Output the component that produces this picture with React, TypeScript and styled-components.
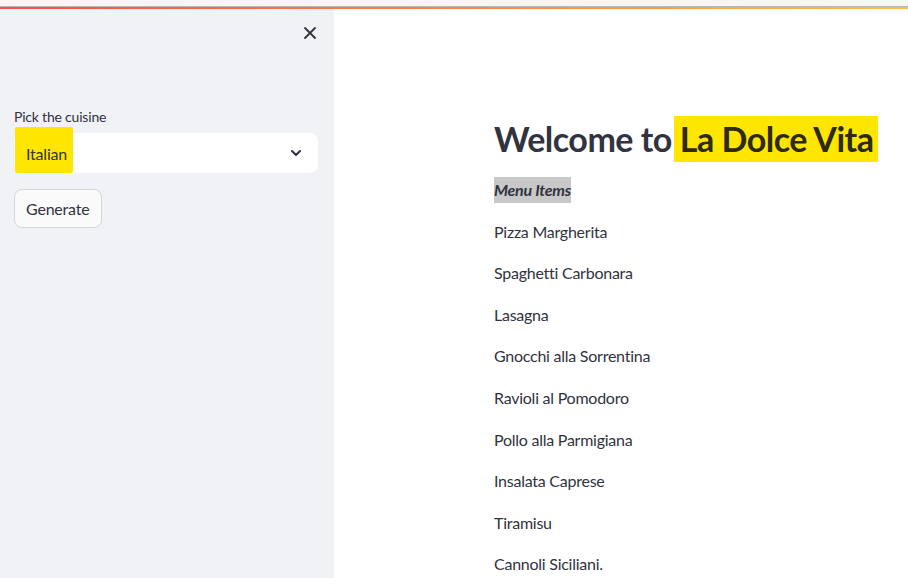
import React from "react";
import styled, { createGlobalStyle } from "styled-components";

const Global = createGlobalStyle`
  html, body { margin: 0; padding: 0; background: #ffffff; }
  body { font-family: "Lato", "Noto Sans", sans-serif; color: #31333f; }
  * { box-sizing: border-box; }
`;

const Page = styled.div`
  width: 908px;
  height: 578px;
  display: flex;
  flex-direction: column;
  overflow: hidden;
`;

const Chrome = styled.div`
  height: 7px;
  background: #f6f6f6;
  border-bottom: 1px solid #b8b8b8;
  flex: none;
`;

const Decoration = styled.div`
  height: 2px;
  flex: none;
  background: linear-gradient(90deg, #ff4b4b, #ffbd45);
`;

const Body = styled.div`
  flex: 1;
  display: flex;
  min-height: 0;
`;

const Sidebar = styled.aside`
  width: 334px;
  flex: none;
  background: #f0f2f6;
  padding: 0 16px 0 14px;
  display: flex;
  flex-direction: column;
`;

const SidebarHeader = styled.div`
  height: 48px;
  display: flex;
  justify-content: flex-end;
  align-items: center;
  margin-right: -4px;
`;

const CloseButton = styled.button`
  width: 24px;
  height: 24px;
  border: none;
  background: transparent;
  padding: 0;
  display: flex;
  align-items: center;
  justify-content: center;
  color: #31333f;
`;

const Label = styled.label`
  margin-top: 50px;
  font-size: 14px;
  line-height: 20px;
  color: #31333f;
  margin-bottom: 6px;
  letter-spacing: -0.2px;
`;

const SelectBox = styled.div`
  height: 40px;
  background: #ffffff;
  border-radius: 8px;
  display: flex;
  align-items: center;
  justify-content: space-between;
  padding: 0 12px;
  font-size: 16px;
  letter-spacing: -0.2px;
`;

type MarkBox = { $l: number; $r: number; $t: number; $b: number };

const Highlight = styled.span<MarkBox>`
  position: relative;
  z-index: 0;
  &::before {
    content: "";
    position: absolute;
    z-index: -1;
    background: #ffe600;
    left: ${(p) => p.$l}px;
    right: ${(p) => p.$r}px;
    top: ${(p) => p.$t}px;
    bottom: ${(p) => p.$b}px;
    border-radius: 2px;
  }
`;

const Chevron = styled.span`
  display: flex;
  color: #31333f;
  margin-right: 2px;
`;

const GenerateButton = styled.button`
  margin-top: 16px;
  align-self: flex-start;
  height: 39px;
  padding: 0 11px;
  font-family: inherit;
  font-size: 16px;
  letter-spacing: -0.2px;
  color: #31333f;
  background: #fafafb;
  border: 1px solid #d5d6d9;
  border-radius: 8px;
`;

const Main = styled.main`
  flex: 1;
  background: #ffffff;
  padding: 108px 0 0 160px;
`;

const Heading = styled.h2`
  margin: 0 0 16px 0;
  font-size: 34px;
  line-height: 44px;
  font-weight: 700;
  color: #31333f;
  letter-spacing: -0.5px;
  white-space: nowrap;
`;

const HeadMark = styled.span`
  background: #ffe600;
  color: #2d2a14;
  padding: 2px 4px 3px 6px;
  margin-left: 2px;
`;

const Para = styled.p`
  margin: 0 0 16px 0;
  font-size: 16px;
  line-height: 25.6px;
  letter-spacing: -0.25px;
  color: #31333f;
`;

const MenuLabel = styled.span`
  display: inline-block;
  background: #c8c8c8;
  font-style: italic;
  font-weight: 700;
`;

const items = [
  "Pizza Margherita",
  "Spaghetti Carbonara",
  "Lasagna",
  "Gnocchi alla Sorrentina",
  "Ravioli al Pomodoro",
  "Pollo alla Parmigiana",
  "Insalata Caprese",
  "Tiramisu",
  "Cannoli Siciliani.",
];

export default function App() {
  return (
    <Page>
      <Global />
      <Chrome />
      <Decoration />
      <Body>
        <Sidebar>
          <SidebarHeader>
            <CloseButton aria-label="Close">
              <svg width="20" height="20" viewBox="0 0 24 24" fill="none" stroke="currentColor" strokeWidth="2.2" strokeLinecap="round">
                <path d="M18 6 6 18M6 6l12 12" />
              </svg>
            </CloseButton>
          </SidebarHeader>
          <Label>Pick the cuisine</Label>
          <SelectBox>
            <Highlight $l={-11} $r={-6} $t={-17} $b={-10}>Italian</Highlight>
            <Chevron>
              <svg width="16" height="16" viewBox="0 0 24 24" fill="none" stroke="currentColor" strokeWidth="3" strokeLinecap="round" strokeLinejoin="round">
                <path d="m6 9 6 6 6-6" />
              </svg>
            </Chevron>
          </SelectBox>
          <GenerateButton>Generate</GenerateButton>
        </Sidebar>
        <Main>
          <Heading>
            Welcome to<HeadMark>La Dolce Vita</HeadMark>
          </Heading>
          <Para>
            <MenuLabel>Menu Items</MenuLabel>
          </Para>
          {items.map((it) => (
            <Para key={it}>{it}</Para>
          ))}
        </Main>
      </Body>
    </Page>
  );
}
